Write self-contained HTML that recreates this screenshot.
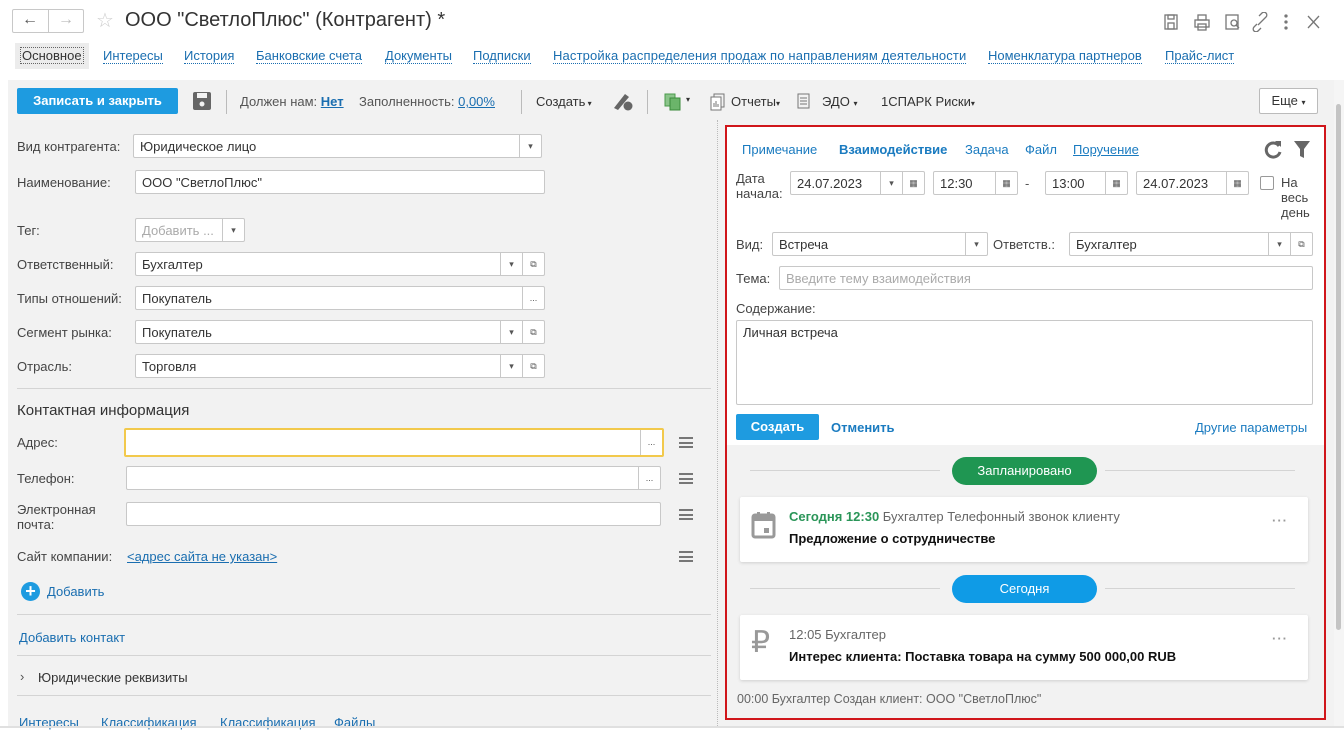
<!DOCTYPE html>
<html><head><meta charset="utf-8">
<style>
*{box-sizing:border-box;margin:0;padding:0}
body{width:1344px;height:728px;overflow:hidden;background:#fff;font-family:"Liberation Sans",Arial,sans-serif;font-size:13px;color:#333;position:relative}
.a{position:absolute;white-space:nowrap}
.lnk{color:#1a6eb0;}
.ul{border-bottom:1px dotted #1a6eb0}
.inp{position:absolute;background:#fff;border:1px solid #c8c8c8;border-radius:2px;height:24px;padding:4px 6px;font-size:13px;color:#333;white-space:nowrap;overflow:hidden}
.btn{position:absolute;right:0;border-left:1px solid #c8c8c8;top:0;bottom:0;width:22px;text-align:center;font-size:9px;line-height:22px;color:#555}
.lbl{position:absolute;color:#444;font-size:13px;white-space:nowrap}
.hamb{position:absolute;width:14px;height:11px;border-top:2px solid #777;border-bottom:2px solid #777}
.hamb:after{content:"";position:absolute;left:0;right:0;top:2.5px;border-top:2px solid #777}
.hr{position:absolute;height:1px;background:#d4d4d4}
</style></head><body>
<!-- title bar -->
<div class="a" style="left:12px;top:9px;width:72px;height:24px;border:1px solid #c8c8c8;border-radius:2px;background:#fff"></div>
<div class="a" style="left:48px;top:9px;width:1px;height:24px;background:#c8c8c8"></div>
<div class="a" style="left:22px;top:11px;font-size:16px;color:#555">&#8592;</div>
<div class="a" style="left:58px;top:11px;font-size:16px;color:#bbb">&#8594;</div>
<div class="a" style="left:96px;top:8px;font-size:20px;color:#ccc">&#9734;</div>
<div class="a" style="left:125px;top:9px;font-size:20px;color:#333">ООО "СветлоПлюс" (Контрагент) *</div>
<svg class="a" style="left:1162px;top:12px" width="170" height="20" fill="none" stroke="#777" stroke-width="1.3">
<rect x="3" y="3" width="12" height="14"/><rect x="6" y="3" width="6" height="4"/><rect x="6" y="11" width="6" height="6"/>
<rect x="33" y="8" width="14" height="7"/><rect x="36" y="3" width="8" height="5"/><rect x="36" y="12" width="8" height="6"/>
<rect x="64" y="3" width="12" height="14"/><circle cx="72" cy="11" r="3"/><path d="M74 13l3 3"/>
<path d="M95 12l-3 3a2.5 2.5 0 0 0 4 4l3-3M101 8l3-3a2.5 2.5 0 0 0-4-4l-3 3M96 13l6-6"/>
<circle cx="124" cy="4" r="1" fill="#777"/><circle cx="124" cy="10" r="1" fill="#777"/><circle cx="124" cy="16" r="1" fill="#777"/>
<path d="M146 4l11 12M157 4l-11 12"/>
</svg>
<!-- tabs -->
<div class="a" style="left:15px;top:43px;width:74px;height:26px;background:#ececec"></div>
<div class="a" style="left:20px;top:47px;border:1px dotted #666;padding:0 1px;color:#333">Основное</div>
<div class="a lnk" style="left:103px;top:48px"><span class="ul">Интересы</span></div>
<div class="a lnk" style="left:184px;top:48px"><span class="ul">История</span></div>
<div class="a lnk" style="left:256px;top:48px"><span class="ul">Банковские счета</span></div>
<div class="a lnk" style="left:385px;top:48px"><span class="ul">Документы</span></div>
<div class="a lnk" style="left:473px;top:48px"><span class="ul">Подписки</span></div>
<div class="a lnk" style="left:553px;top:48px;letter-spacing:0.15px"><span class="ul">Настройка распределения продаж по направлениям деятельности</span></div>
<div class="a lnk" style="left:988px;top:48px"><span class="ul">Номенклатура партнеров</span></div>
<div class="a lnk" style="left:1165px;top:48px"><span class="ul">Прайс-лист</span></div>
<!-- gray area -->
<div class="a" style="left:8px;top:80px;width:1326px;height:648px;background:#f2f2f2"></div>
<div class="a" style="left:1334px;top:80px;width:10px;height:648px;background:#f5f5f5"></div>
<div class="a" style="left:1336px;top:104px;width:5px;height:526px;background:#c4c4c4;border-radius:3px"></div>
<!-- toolbar -->
<div class="a" style="left:17px;top:88px;width:161px;height:26px;background:#1e9be0;border-radius:2px;color:#fff;font-weight:bold;text-align:center;line-height:26px">Записать и закрыть</div>
<svg class="a" style="left:192px;top:91px" width="20" height="20"><rect x="1" y="1" width="18" height="18" rx="2" fill="#666"/><rect x="5" y="2" width="10" height="5" fill="#f2f2f2"/><circle cx="10" cy="13" r="2.5" fill="#f2f2f2"/></svg>
<div class="a" style="left:226px;top:90px;width:1px;height:24px;background:#bbb"></div>
<div class="a" style="left:240px;top:94px;color:#555">Должен нам: <b class="lnk" style="text-decoration:underline">Нет</b></div>
<div class="a" style="left:359px;top:94px;color:#555">Заполненность: <span class="lnk" style="text-decoration:underline">0,00%</span></div>
<div class="a" style="left:521px;top:90px;width:1px;height:24px;background:#bbb"></div>
<div class="a" style="left:536px;top:94px;color:#333">Создать<span style="font-size:8px"> ▾</span></div>
<svg class="a" style="left:611px;top:90px" width="24" height="22"><path d="M3 18L14 4l4 3L7 20z" fill="#666"/><circle cx="17" cy="16" r="4.5" fill="#666"/></svg>
<div class="a" style="left:647px;top:90px;width:1px;height:24px;background:#bbb"></div>
<svg class="a" style="left:664px;top:93px" width="18" height="18"><rect x="1" y="1" width="10" height="12" fill="#8bc48a" stroke="#4a9a4a"/><rect x="6" y="5" width="10" height="12" fill="#6bb56a" stroke="#3a8a3a"/></svg>
<div class="a" style="left:686px;top:95px;font-size:8px">▾</div>
<svg class="a" style="left:710px;top:93px" width="16" height="18" fill="none" stroke="#777"><rect x="4" y="1" width="10" height="13"/><rect x="1" y="4" width="10" height="13" fill="#fff"/><path d="M4 14v-4M6 14v-6M8 14v-3"/></svg>
<div class="a" style="left:731px;top:94px">Отчеты<span style="font-size:8px">▾</span></div>
<svg class="a" style="left:796px;top:93px" width="16" height="18" fill="none" stroke="#777"><rect x="2" y="1" width="11" height="14"/><path d="M4 5h7M4 8h7M4 11h7"/></svg>
<div class="a" style="left:822px;top:94px">ЭДО <span style="font-size:8px">▾</span></div>
<div class="a" style="left:881px;top:94px">1СПАРК Риски<span style="font-size:8px">▾</span></div>
<div class="a" style="left:1259px;top:88px;width:59px;height:26px;background:#fff;border:1px solid #bbb;border-radius:2px;text-align:center;line-height:24px">Еще <span style="font-size:8px">▾</span></div>
<!-- left form -->
<div class="lbl" style="left:17px;top:139px">Вид контрагента:</div>
<div class="inp" style="left:133px;top:134px;width:409px">Юридическое лицо<div class="btn">▾</div></div>
<div class="lbl" style="left:17px;top:175px">Наименование:</div>
<div class="inp" style="left:135px;top:170px;width:410px">ООО "СветлоПлюс"</div>
<div class="lbl" style="left:17px;top:223px">Тег:</div>
<div class="inp" style="left:135px;top:218px;width:110px;color:#aaa">Добавить ...<div class="btn" style="color:#555">▾</div></div>
<div class="lbl" style="left:17px;top:257px">Ответственный:</div>
<div class="inp" style="left:135px;top:252px;width:410px">Бухгалтер<div class="btn" style="right:22px">▾</div><div class="btn">⧉</div></div>
<div class="lbl" style="left:17px;top:291px">Типы отношений:</div>
<div class="inp" style="left:135px;top:286px;width:410px">Покупатель<div class="btn">...</div></div>
<div class="lbl" style="left:17px;top:325px">Сегмент рынка:</div>
<div class="inp" style="left:135px;top:320px;width:410px">Покупатель<div class="btn" style="right:22px">▾</div><div class="btn">⧉</div></div>
<div class="lbl" style="left:17px;top:359px">Отрасль:</div>
<div class="inp" style="left:135px;top:354px;width:410px">Торговля<div class="btn" style="right:22px">▾</div><div class="btn">⧉</div></div>
<div class="hr" style="left:17px;top:388px;width:694px"></div>
<div class="a" style="left:17px;top:402px;font-size:15px;color:#333">Контактная информация</div>
<div class="lbl" style="left:17px;top:435px">Адрес:</div>
<div class="inp" style="left:124px;top:428px;width:540px;height:29px;border:2px solid #f2c94c"><div class="btn" style="line-height:25px">...</div></div>
<div class="hamb" style="left:679px;top:437px"></div>
<div class="lbl" style="left:17px;top:471px">Телефон:</div>
<div class="inp" style="left:126px;top:466px;width:535px"><div class="btn">...</div></div>
<div class="hamb" style="left:679px;top:473px"></div>
<div class="lbl" style="left:17px;top:502px;line-height:15px;white-space:normal">Электронная<br>почта:</div>
<div class="inp" style="left:126px;top:502px;width:535px"></div>
<div class="hamb" style="left:679px;top:509px"></div>
<div class="lbl" style="left:17px;top:549px">Сайт компании:</div>
<div class="a lnk" style="left:127px;top:549px;text-decoration:underline">&lt;адрес сайта не указан&gt;</div>
<div class="hamb" style="left:679px;top:551px"></div>
<div class="a" style="left:21px;top:582px;width:19px;height:19px;border-radius:50%;background:#1e9be0;color:#fff;font-weight:bold;font-size:18px;line-height:18px;text-align:center">+</div>
<div class="a lnk" style="left:47px;top:584px">Добавить</div>
<div class="hr" style="left:17px;top:614px;width:694px"></div>
<div class="a lnk" style="left:19px;top:630px">Добавить контакт</div>
<div class="hr" style="left:17px;top:655px;width:694px"></div>
<div class="a" style="left:20px;top:669px;color:#555">&#8250;</div>
<div class="a" style="left:38px;top:670px;color:#333">Юридические реквизиты</div>
<div class="hr" style="left:17px;top:695px;width:694px"></div>
<div class="a lnk" style="left:19px;top:715px">Интересы</div>
<div class="a lnk" style="left:101px;top:715px">Классификация</div>
<div class="a lnk" style="left:220px;top:715px">Классификация</div>
<div class="a lnk" style="left:334px;top:715px">Файлы</div>
<div class="a" style="left:0;top:726px;width:1344px;height:2px;background:#e0e0e0"></div>
<!-- right panel -->
<div class="a" style="left:717px;top:120px;width:1px;height:606px;border-left:1px dotted #bbb"></div>
<div class="a" style="left:725px;top:125px;width:601px;height:595px;border:2px solid #d0161b;background:#f2f2f2"></div>
<div class="a" style="left:727px;top:127px;width:597px;height:318px;background:#fff"></div>
<div class="a" style="left:742px;top:142px;color:#1a7bc0">Примечание</div>
<div class="a" style="left:839px;top:142px;color:#1a7bc0;font-weight:bold">Взаимодействие</div>
<div class="a" style="left:965px;top:142px;color:#1a7bc0">Задача</div>
<div class="a" style="left:1025px;top:142px;color:#1a7bc0">Файл</div>
<div class="a" style="left:1073px;top:142px;color:#1a7bc0;text-decoration:underline">Поручение</div>
<svg class="a" style="left:1262px;top:138px" width="50" height="22"><path d="M17 8a7 7 0 1 0 1 6" fill="none" stroke="#666" stroke-width="3"/><path d="M13 3l6 0 0 6z" fill="#666"/><path d="M32 3h16l-6 8v9l-4-2v-7z" fill="#666"/></svg>
<div class="lbl" style="left:736px;top:171px;line-height:15px;white-space:normal">Дата<br>начала:</div>
<div class="inp" style="left:790px;top:171px;width:135px">24.07.2023<div class="btn" style="right:22px">▾</div><div class="btn">▦</div></div>
<div class="inp" style="left:933px;top:171px;width:85px">12:30<div class="btn">▦</div></div>
<div class="a" style="left:1025px;top:176px;color:#555">-</div>
<div class="inp" style="left:1045px;top:171px;width:83px">13:00<div class="btn">▦</div></div>
<div class="inp" style="left:1136px;top:171px;width:113px">24.07.2023<div class="btn">▦</div></div>
<div class="a" style="left:1260px;top:176px;width:14px;height:14px;border:1px solid #999;border-radius:2px;background:#fff"></div>
<div class="lbl" style="left:1281px;top:175px;line-height:15px;white-space:normal">На<br>весь<br>день</div>
<div class="lbl" style="left:736px;top:237px">Вид:</div>
<div class="inp" style="left:772px;top:232px;width:216px">Встреча<div class="btn">▾</div></div>
<div class="lbl" style="left:993px;top:237px">Ответств.:</div>
<div class="inp" style="left:1069px;top:232px;width:244px">Бухгалтер<div class="btn" style="right:22px">▾</div><div class="btn">⧉</div></div>
<div class="lbl" style="left:736px;top:271px">Тема:</div>
<div class="inp" style="left:779px;top:266px;width:534px;color:#aaa">Введите тему взаимодействия</div>
<div class="lbl" style="left:736px;top:301px">Содержание:</div>
<div class="inp" style="left:736px;top:320px;width:577px;height:85px">Личная встреча</div>
<div class="a" style="left:736px;top:414px;width:83px;height:26px;background:#1e9be0;border-radius:2px;color:#fff;font-weight:bold;text-align:center;line-height:26px">Создать</div>
<div class="a" style="left:831px;top:420px;color:#1a7bc0;font-weight:bold">Отменить</div>
<div class="a" style="left:1195px;top:420px;color:#1a7bc0">Другие параметры</div>
<!-- timeline -->
<div class="hr" style="left:750px;top:470px;width:190px"></div>
<div class="hr" style="left:1105px;top:470px;width:190px"></div>
<div class="a" style="left:952px;top:457px;width:145px;height:28px;border-radius:14px;background:#1f9652;color:#fff;text-align:center;line-height:28px">Запланировано</div>
<div class="a" style="left:740px;top:497px;width:568px;height:65px;background:#fff;box-shadow:0 1px 3px rgba(0,0,0,.15);border-radius:2px"></div>
<svg class="a" style="left:751px;top:511px" width="26" height="28"><rect x="2" y="4" width="21" height="22" rx="2" fill="none" stroke="#999" stroke-width="3"/><rect x="2" y="4" width="21" height="6" fill="#999"/><rect x="6" y="1" width="3" height="5" fill="#999"/><rect x="16" y="1" width="3" height="5" fill="#999"/><rect x="13" y="17" width="5" height="5" fill="#999"/></svg>
<div class="a" style="left:789px;top:509px;color:#666"><b style="color:#2a9558">Сегодня 12:30</b> Бухгалтер Телефонный звонок клиенту</div>
<div class="a" style="left:789px;top:531px;color:#111;font-weight:bold">Предложение о сотрудничестве</div>
<div class="a" style="left:1272px;top:513px;color:#999;font-weight:bold;letter-spacing:1px">···</div>
<div class="hr" style="left:750px;top:588px;width:190px"></div>
<div class="hr" style="left:1105px;top:588px;width:190px"></div>
<div class="a" style="left:952px;top:575px;width:145px;height:28px;border-radius:14px;background:#0f9be6;color:#fff;text-align:center;line-height:28px">Сегодня</div>
<div class="a" style="left:740px;top:615px;width:568px;height:65px;background:#fff;box-shadow:0 1px 3px rgba(0,0,0,.15);border-radius:2px"></div>
<div class="a" style="left:751px;top:625px;font-size:30px;color:#999">₽</div>
<div class="a" style="left:789px;top:627px;color:#666">12:05 Бухгалтер</div>
<div class="a" style="left:789px;top:649px;color:#111;font-weight:bold">Интерес клиента: Поставка товара на сумму 500 000,00 RUB</div>
<div class="a" style="left:1272px;top:631px;color:#999;font-weight:bold;letter-spacing:1px">···</div>
<div class="a" style="left:737px;top:692px;color:#666;font-size:12.5px">00:00 Бухгалтер Создан клиент: ООО "СветлоПлюс"</div>
</body></html>
